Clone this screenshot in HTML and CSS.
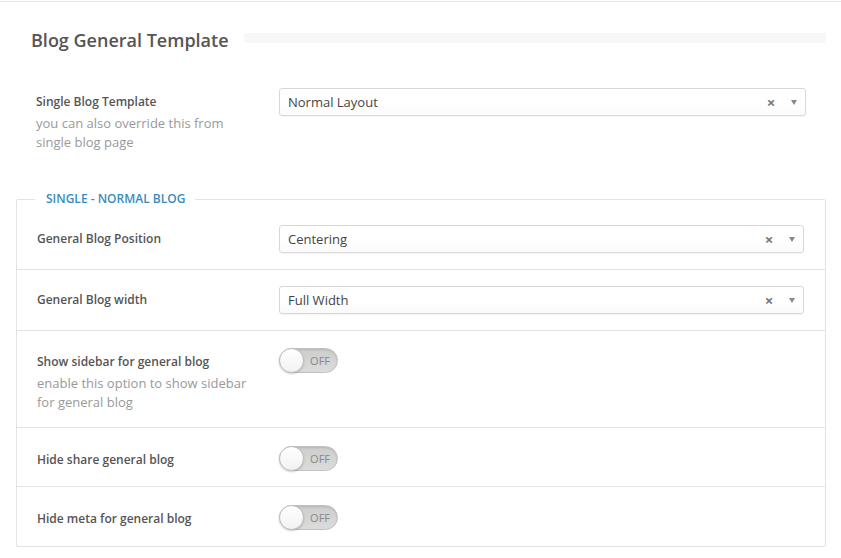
FILE: index.html
```html
<!DOCTYPE html>
<html>
<head>
<meta charset="utf-8">
<link rel="stylesheet" href="styles.css">
</head>
<body>
<div class="topline"></div>
<div class="page">
  <div class="section-head">
    <h2 class="section-title">Blog General Template</h2>
    <div class="section-bar"></div>
  </div>

  <div class="row row-top">
    <div class="label-col">
      <div class="label">Single Blog Template</div>
      <div class="desc">you can also override this from<br>single blog page</div>
    </div>
    <div class="control-col">
      <div class="select"><span class="select-text">Normal Layout</span><span class="select-clear">×</span><span class="select-arrow"></span></div>
    </div>
  </div>

  <fieldset class="group">
    <legend class="group-legend">SINGLE - NORMAL BLOG</legend>
    <div class="row first">
      <div class="label-col"><div class="label">General Blog Position</div></div>
      <div class="control-col"><div class="select"><span class="select-text">Centering</span><span class="select-clear">×</span><span class="select-arrow"></span></div></div>
    </div>
    <div class="row">
      <div class="label-col"><div class="label">General Blog width</div></div>
      <div class="control-col"><div class="select"><span class="select-text">Full Width</span><span class="select-clear">×</span><span class="select-arrow"></span></div></div>
    </div>
    <div class="row row-desc">
      <div class="label-col">
        <div class="label">Show sidebar for general blog</div>
        <div class="desc">enable this option to show sidebar<br>for general blog</div>
      </div>
      <div class="control-col"><div class="toggle"><span class="knob"></span><span class="toggle-text">OFF</span></div></div>
    </div>
    <div class="row row-toggle">
      <div class="label-col"><div class="label">Hide share general blog</div></div>
      <div class="control-col"><div class="toggle"><span class="knob"></span><span class="toggle-text">OFF</span></div></div>
    </div>
    <div class="row row-toggle last">
      <div class="label-col"><div class="label">Hide meta for general blog</div></div>
      <div class="control-col"><div class="toggle"><span class="knob"></span><span class="toggle-text">OFF</span></div></div>
    </div>
  </fieldset>
</div>
</body>
</html>
```

FILE: styles.css
```css
html, body {
  margin: 0;
  padding: 0;
  background: #fff;
  font-family: "Open Sans", "Liberation Sans", sans-serif;
  color: #555;
}
.topline {
  height: 1px;
  margin-top: 1px;
  background: #e3e3e3;
}
.page {
  padding: 0 15px 0 16px;
}
.section-head {
  display: flex;
  align-items: flex-start;
  padding: 25px 0 0 15px;
  gap: 15px;
}
.section-title {
  margin: 0;
  font-size: 18px;
  font-weight: 600;
  line-height: 26px;
  color: #555;
  white-space: nowrap;
}
.section-bar {
  flex: 1;
  height: 10px;
  margin-top: 6px;
  background: #f7f7f7;
}
.row {
  display: flex;
  align-items: flex-start;
}
.row-top {
  padding: 35px 20px 0 20px;
  height: 102px;
}
.label-col {
  width: 243px;
  flex: none;
}
.group .label-col {
  width: 242px;
}
.control-col {
  flex: 1;
}
.label {
  font-size: 12px;
  font-weight: 600;
  line-height: 28px;
  color: #555;
}
.desc {
  font-size: 13px;
  line-height: 19px;
  color: #999;
  margin-top: -2px;
}
.select {
  display: flex;
  align-items: center;
  height: 26px;
  border: 1px solid #d8d8d8;
  border-radius: 3px;
  background: linear-gradient(#fff 50%, #fbfbfb);
  box-shadow: 0 1px 1px rgba(0,0,0,0.04);
  padding-left: 8px;
}
.select-text {
  flex: 1;
  font-size: 13px;
  color: #444;
}
.select-clear {
  font-size: 15px;
  font-weight: 700;
  color: #777;
  width: 12px;
  text-align: center;
  line-height: 1;
}
.select-arrow {
  width: 0;
  height: 0;
  border-left: 3px solid transparent;
  border-right: 3px solid transparent;
  border-top: 5px solid #888;
  margin: 0 8px 0 14px;
}
.group {
  margin: 0;
  padding: 0;
  border: 1px solid #e3e3e3;
  border-radius: 2px;
  box-shadow: 0 1px 1px rgba(0,0,0,0.06);
  min-inline-size: 0;
}
.group-legend {
  margin-left: 18px;
  padding: 0 10px 0 11px;
  font-size: 12px;
  font-weight: 600;
  line-height: 18px;
  color: #3a8bbd;
}
.group .row {
  padding: 16px 21px 16px 20px;
  border-bottom: 1px solid #e3e3e3;
}
.group .row.first {
  padding-top: 17px;
}
.group .row.row-desc {
  padding-top: 17px;
  padding-bottom: 15px;
}
.group .row.row-toggle {
  padding-top: 18px;
  padding-bottom: 12px;
}
.group .row.last {
  border-bottom: none;
  padding-bottom: 13px;
}
.toggle {
  position: relative;
  width: 57px;
  height: 23px;
  border: 1px solid #c2c2c2;
  border-radius: 13px;
  background: linear-gradient(#cdcdcd, #dcdcdc);
  box-shadow: inset 0 1px 2px rgba(0,0,0,0.12);
}
.knob {
  position: absolute;
  left: -1px;
  top: -1px;
  width: 23px;
  height: 23px;
  border-radius: 50%;
  border: 1px solid #bdbdbd;
  background: linear-gradient(#fff, #f2f2f2);
  box-shadow: 0 1px 2px rgba(0,0,0,0.2);
}
.toggle-text {
  position: absolute;
  right: 7px;
  top: 0;
  line-height: 23px;
  font-size: 11px;
  color: #888;
}
```
